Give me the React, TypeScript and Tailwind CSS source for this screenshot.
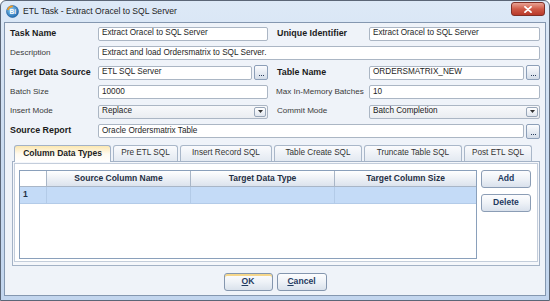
import React from "react";

const Label: React.FC<{ children: React.ReactNode; bold?: boolean; className?: string }> = ({
  children,
  bold,
  className = "",
}) => (
  <div
    className={`h-[15px] flex items-center whitespace-nowrap ${
      bold ? "text-[8.9px] font-bold text-[#1b1b1b]" : "text-[8.1px] text-[#3a3a3a]"
    } ${className}`}
  >
    {children}
  </div>
);

const Box: React.FC<{ children?: React.ReactNode; className?: string }> = ({ children, className = "" }) => (
  <div
    className={`h-[14px] min-w-0 flex items-center px-[3px] bg-white border border-[#abb6c4] rounded-[2px] text-[8.2px] text-[#1e1e1e] whitespace-nowrap overflow-hidden ${className}`}
  >
    {children}
  </div>
);

const Dots = () => (
  <div className="w-[14px] h-[15px] shrink-0 rounded-[2px] border border-[#8c9fb8] bg-gradient-to-b from-[#fbfcfe] to-[#d3dce8] flex items-end justify-center pb-[3px] gap-[1px]">
    <div className="w-[1px] h-[1px] bg-[#2a3f5f]" />
    <div className="w-[1px] h-[1px] bg-[#2a3f5f]" />
    <div className="w-[1px] h-[1px] bg-[#2a3f5f]" />
  </div>
);

const WithDots: React.FC<{ children: React.ReactNode; className?: string }> = ({ children, className = "" }) => (
  <div className={`flex items-center gap-[2px] ${className}`}>
    <Box className="flex-1">{children}</Box>
    <Dots />
  </div>
);

const Select: React.FC<{ value: string }> = ({ value }) => (
  <div className="h-[14px] flex items-center justify-between pl-[3px] pr-[1px] border border-[#abb6c4] rounded-[2px] bg-gradient-to-b from-[#f8f9fb] to-[#eaedf1] text-[8.2px] text-[#222]">
    <span>{value}</span>
    <div className="w-[12px] h-[10px] border border-[#98a6b8] rounded-[2px] bg-gradient-to-b from-white to-[#e0e6ee] flex items-center justify-center">
      <svg width="5" height="3" viewBox="0 0 5 3">
        <path d="M0 0h5L2.5 3z" fill="#333" />
      </svg>
    </div>
  </div>
);

const tabs = [
  { name: "Column Data Types", w: "w-[97px]", active: true },
  { name: "Pre ETL SQL", w: "w-[65px]" },
  { name: "Insert Record SQL", w: "w-[92px]" },
  { name: "Table Create SQL", w: "w-[88px]" },
  { name: "Truncate Table SQL", w: "w-[98px]" },
  { name: "Post ETL SQL", w: "w-[68px]" },
];

const SideButton: React.FC<{ children: React.ReactNode }> = ({ children }) => (
  <div className="h-[18px] rounded-[3px] border border-[#8b9db5] bg-gradient-to-b from-[#fdfdfe] via-[#eef2f7] to-[#d9e1ec] flex items-center justify-center text-[8.6px] font-bold text-[#1f3a5f]">
    {children}
  </div>
);

export default function App() {
  return (
    <div className="w-[550px] h-[301px] font-['Liberation_Sans',Arial,sans-serif] rounded-t-[6px] border border-[#5b6677] bg-gradient-to-b from-[#dde9f7] via-[#cadbf0] to-[#c2d5ee] flex flex-col">
      {/* Title bar */}
      <div className="h-[21px] flex items-center pl-[5px] pr-[4px] shrink-0">
        <svg width="13" height="13" viewBox="0 0 13 13">
          <defs>
            <radialGradient id="ic" cx="40%" cy="35%" r="70%">
              <stop offset="0" stopColor="#8fcbf2" />
              <stop offset="1" stopColor="#1c67ad" />
            </radialGradient>
          </defs>
          <circle cx="6.5" cy="6.5" r="6" fill="url(#ic)" stroke="#1a5d9a" strokeWidth="0.6" />
          <path d="M1.8 5 A5 5 0 0 1 6.8 1.3" stroke="#f39a1e" strokeWidth="1.7" fill="none" />
          <text
            x="6.8"
            y="9.4"
            fontSize="6.5"
            fontWeight="bold"
            fill="#fff"
            textAnchor="middle"
            fontFamily="Liberation Sans, Arial, sans-serif"
          >
            Bi
          </text>
        </svg>
        <span className="ml-[4px] text-[8.6px] text-[#1e1e1e]">ETL Task - Extract Oracel to SQL Server</span>
        <div className="ml-auto self-start mt-[1px] w-[34px] h-[14px] rounded-[3px] border border-[#7f3027] bg-gradient-to-b from-[#e8a294] via-[#cf5a47] to-[#b8392a] flex items-center justify-center">
          <svg width="8" height="7" viewBox="0 0 8 7">
            <path d="M1 0.8 L7 6.2 M7 0.8 L1 6.2" stroke="#fff" strokeWidth="1.8" strokeLinecap="round" />
          </svg>
        </div>
      </div>

      {/* Client area */}
      <div className="flex-1 mx-[3px] mb-[4px] border border-[#8497b0] bg-[#eff3f9] pt-[3px] px-[5px] flex flex-col">
        <div className="grid grid-cols-[88px_170px_101px_171px] gap-y-[4.5px] items-center">
          <Label bold>Task Name</Label>
          <Box>Extract Oracel to SQL Server</Box>
          <Label bold className="pl-[9px]">Unique Identifier</Label>
          <Box>Extract Oracel to SQL Server</Box>

          <Label>Description</Label>
          <Box className="col-span-3">Extract and load Ordersmatrix to SQL Server.</Box>

          <Label bold>Target Data Source</Label>
          <WithDots>ETL SQL Server</WithDots>
          <Label bold className="pl-[9px]">Table Name</Label>
          <WithDots>ORDERSMATRIX_NEW</WithDots>

          <Label>Batch Size</Label>
          <Box>10000</Box>
          <Label className="pl-[8px]">Max In-Memory Batches</Label>
          <Box>10</Box>

          <Label>Insert Mode</Label>
          <Select value="Replace" />
          <Label className="pl-[9px]">Commit Mode</Label>
          <Select value="Batch Completion" />

          <Label bold>Source Report</Label>
          <WithDots className="col-span-3">Oracle Ordersmatrix Table</WithDots>
        </div>

        {/* Tabs */}
        <div className="ml-[2px] mt-[5px] flex flex-col">
          <div className="flex items-end gap-[2px] pl-[2px] h-[17px]">
            {tabs.map((t) =>
              t.active ? (
                <div
                  key={t.name}
                  className={`${t.w} h-[17px] -mb-[1px] relative z-10 rounded-t-[3px] border border-b-0 border-[#a3b2c6] bg-gradient-to-b from-[#fbe7b0] via-[#fffaf0] to-white flex items-center justify-center text-[8.5px] font-bold text-[#222]`}
                >
                  {t.name}
                </div>
              ) : (
                <div
                  key={t.name}
                  className={`${t.w} h-[16px] rounded-t-[3px] border border-b-0 border-[#a9b7c9] bg-gradient-to-b from-[#fafbfd] to-[#e3e9f1] flex items-center justify-center text-[8.2px] text-[#333]`}
                >
                  {t.name}
                </div>
              )
            )}
          </div>

          <div className="h-[105px] border border-[#a3b2c6] bg-[#f5f7fb] p-[1px] pb-[3px] flex">
            <div className="flex-1 border border-[#c3cddb] bg-white pl-[4px] pr-[6px] pt-[6px] pb-[2px] flex gap-[4px]">
              {/* Grid */}
              <div className="flex-1 border border-[#8aa0bb] bg-white flex flex-col">
                <div className="h-[16px] flex border-b border-[#a9b6c7]">
                  <div className="w-[26px] bg-white" />
                  {["Source Column Name", "Target Data Type", "Target Column Size"].map((h, i) => (
                    <div
                      key={h}
                      className={`${
                        i === 2 ? "flex-1" : "w-[144px]"
                      } border-l border-[#a9b6c7] bg-gradient-to-b from-white to-[#dce3ed] flex items-center justify-center text-[8.5px] font-bold text-[#1f2f44]`}
                    >
                      {h}
                    </div>
                  ))}
                </div>
                <div className="h-[17px] flex bg-[#c4dbf7] border-b border-[#b3cbe8]">
                  <div className="w-[26px] flex items-center pl-[3px] text-[8.5px] font-bold text-[#1f2f44]">1</div>
                  <div className="w-[144px] border-l border-[#b3cbe8]" />
                  <div className="w-[144px] border-l border-[#b3cbe8]" />
                  <div className="flex-1 border-l border-[#b3cbe8]" />
                </div>
              </div>
              {/* Buttons */}
              <div className="w-[50px] flex flex-col gap-[6px]">
                <SideButton>Add</SideButton>
                <SideButton>Delete</SideButton>
              </div>
            </div>
          </div>
        </div>

        {/* Dialog buttons */}
        <div className="mt-[7px] flex justify-center gap-[4px]">
          <div className="w-[49px] h-[18px] rounded-[3px] border border-[#8496ae] bg-gradient-to-b from-[#fdfdfe] via-[#eef2f7] to-[#dae2ec] shadow-[inset_0_2px_0_#f5d68a] flex items-center justify-center text-[8.6px] font-bold text-[#1f3a5f]">
            <span>
              <span className="underline">O</span>K
            </span>
          </div>
          <div className="w-[50px] h-[18px] rounded-[3px] border border-[#8496ae] bg-gradient-to-b from-[#fdfdfe] via-[#eef2f7] to-[#dae2ec] flex items-center justify-center text-[8.6px] font-bold text-[#1f3a5f]">
            <span>
              <span className="underline">C</span>ancel
            </span>
          </div>
        </div>
      </div>
    </div>
  );
}
